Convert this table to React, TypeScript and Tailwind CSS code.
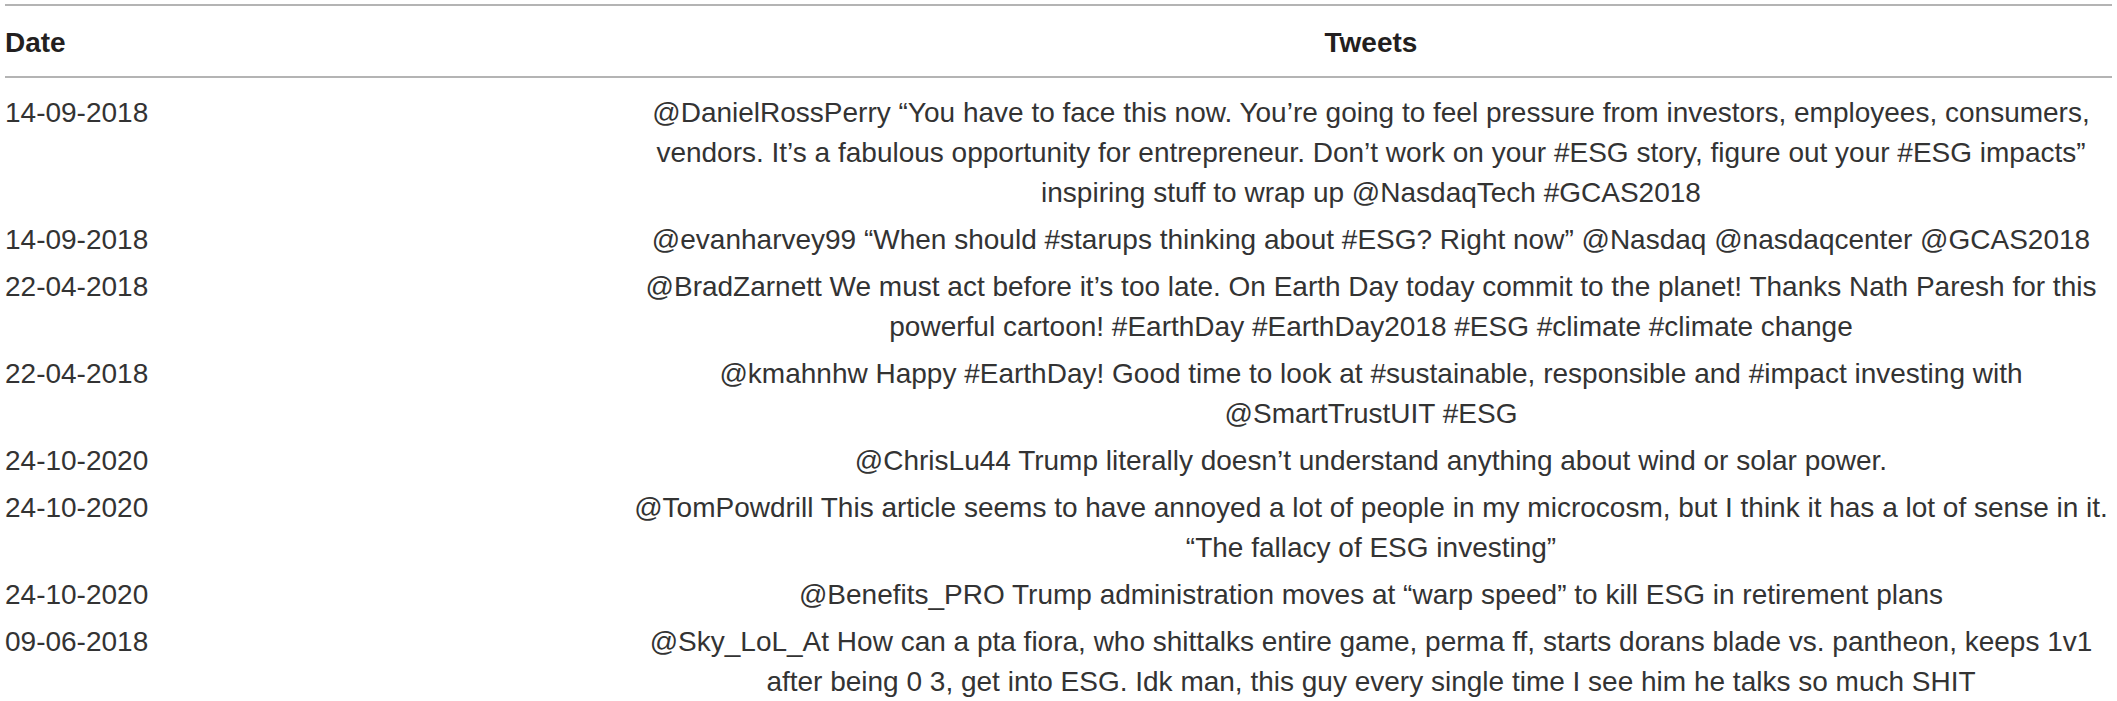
const ROWS: { date: string; lines: string[] }[] = [
  {
    date: '14-09-2018',
    lines: [
      '@DanielRossPerry “You have to face this now. You’re going to feel pressure from investors, employees, consumers,',
      'vendors. It’s a fabulous opportunity for entrepreneur. Don’t work on your #ESG story, figure out your #ESG impacts”',
      'inspiring stuff to wrap up @NasdaqTech #GCAS2018',
    ],
  },
  {
    date: '14-09-2018',
    lines: ['@evanharvey99 “When should #starups thinking about #ESG? Right now” @Nasdaq @nasdaqcenter @GCAS2018'],
  },
  {
    date: '22-04-2018',
    lines: [
      '@BradZarnett We must act before it’s too late. On Earth Day today commit to the planet! Thanks Nath Paresh for this',
      'powerful cartoon! #EarthDay #EarthDay2018 #ESG #climate #climate change',
    ],
  },
  {
    date: '22-04-2018',
    lines: [
      '@kmahnhw Happy #EarthDay! Good time to look at #sustainable, responsible and #impact investing with',
      '@SmartTrustUIT #ESG',
    ],
  },
  {
    date: '24-10-2020',
    lines: ['@ChrisLu44 Trump literally doesn’t understand anything about wind or solar power.'],
  },
  {
    date: '24-10-2020',
    lines: [
      '@TomPowdrill This article seems to have annoyed a lot of people in my microcosm, but I think it has a lot of sense in it.',
      '“The fallacy of ESG investing”',
    ],
  },
  {
    date: '24-10-2020',
    lines: ['@Benefits_PRO Trump administration moves at “warp speed” to kill ESG in retirement plans'],
  },
  {
    date: '09-06-2018',
    lines: [
      '@Sky_LoL_At How can a pta fiora, who shittalks entire game, perma ff, starts dorans blade vs. pantheon, keeps 1v1',
      'after being 0 3, get into ESG. Idk man, this guy every single time I see him he talks so much SHIT',
    ],
  },
];

// ── Main App ──────────────────────────────────────────────────
export default function App() {
  return (
    <div className="min-h-screen bg-white px-[5px] pt-[4px] font-['Liberation_Sans',Arial,sans-serif] text-[28px] leading-[40px] text-[#333333]">
      {/* Header */}
      <div className="grid grid-cols-[625px_1fr] border-y-2 border-[#b4b4b4] pt-[17px] pb-[13px] font-bold text-[#231f20]">
        <div>Date</div>
        <div className="text-center">Tweets</div>
      </div>

      {/* Body */}
      <div className="pt-[11px]">
        {ROWS.map((row, i) => (
          <div key={i} className="grid grid-cols-[625px_1fr] py-[3.5px]">
            <div>{row.date}</div>
            <div className="text-center">
              {row.lines.map((line, j) => (
                <div key={j} className="whitespace-nowrap">{line}</div>
              ))}
            </div>
          </div>
        ))}
      </div>
    </div>
  );
}
